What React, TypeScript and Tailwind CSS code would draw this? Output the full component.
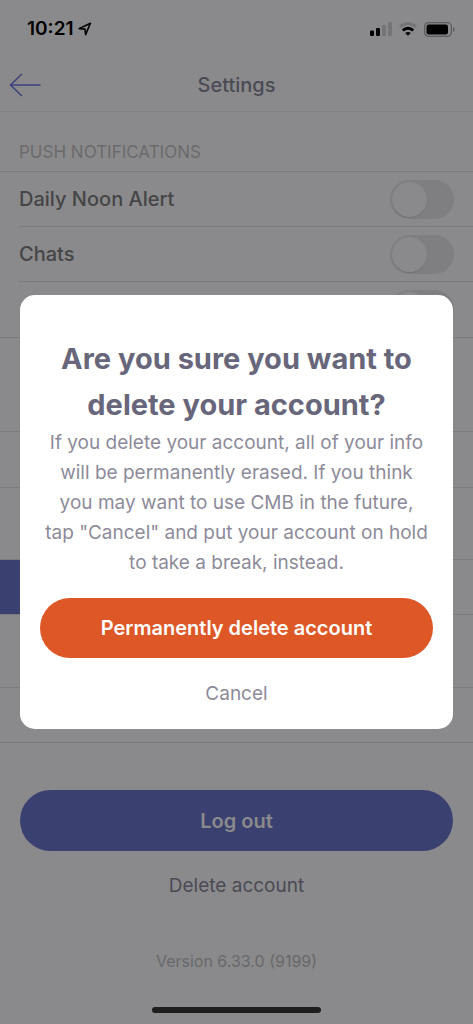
import { useState } from "react";

function StatusBar() {
  return (
    <div className="flex h-[58px] items-center justify-between pl-[27px] pr-[18px] text-black">
      <div className="flex items-center gap-1">
        <span className="text-[19px] leading-6 font-semibold">10:21</span>
        <svg width="14" height="14" viewBox="0 0 14 14" fill="none" aria-hidden="true">
          <path d="M1.2 6.6 12.4 1.3 7.6 12.6 7 7.1Z" stroke="currentColor" strokeWidth="1.6" strokeLinejoin="round" />
        </svg>
      </div>
      <div className="flex items-center gap-[7px]">
        <svg width="22" height="14" viewBox="0 0 22 14" aria-hidden="true">
          <rect x="0" y="8.5" width="4" height="5.5" rx="1.2" fill="#000" />
          <rect x="6" y="6" width="4" height="8" rx="1.2" fill="#000" />
          <rect x="12" y="3" width="4" height="11" rx="1.2" fill="#747476" />
          <rect x="18" y="0" width="4" height="14" rx="1.2" fill="#747476" />
        </svg>
        <svg width="18" height="14" viewBox="0 0 18 14" fill="none" aria-hidden="true">
          <path d="M1 5C5.500 .6 12.500 .6 17 5" stroke="#747476" strokeWidth="2.800" />
          <path d="M3.800 8.400C6.800 5.500 11.200 5.500 14.200 8.400" stroke="#000" strokeWidth="2.800" />
          <path d="M9 13.800 6.200 11C7.800 9.700 10.200 9.700 11.800 11Z" fill="#000" />
        </svg>
        <svg width="31" height="15" viewBox="0 0 31 15" aria-hidden="true">
          <rect x=".6" y=".6" width="26.800" height="13.800" rx="4" fill="none" stroke="#5c5c5e" strokeWidth="1.200" />
          <rect x="2.500" y="2.500" width="21.500" height="10" rx="2.200" fill="#000" />
          <path d="M29 5.200C31.200 6 31.200 9 29 9.800Z" fill="#5c5c5e" />
        </svg>
      </div>
    </div>
  );
}

function ToggleRow({ label, name }: { label: string; name: string }) {
  const [on, setOn] = useState(false);
  return (
    <label className="flex h-[55px] items-center justify-between pr-[19px] text-[20px] leading-6 font-medium text-[#454547]">
      <span>{label}</span>
      <span className="flex h-[39px] w-16 items-center rounded-full bg-[#7f7f81] p-[2px]">
        <input
          type="checkbox"
          aria-label={name}
          checked={on}
          onChange={() => setOn(!on)}
          className="h-[35px] w-[35px] appearance-none rounded-full bg-[#8a8a8c] shadow-[0_1px_1px_#727274] checked:ml-auto"
        />
      </span>
    </label>
  );
}

export default function App() {
  const [open, setOpen] = useState(true);
  return (
    <div className="relative min-h-screen bg-[#8a8a8c] font-['Inter','Liberation_Sans',sans-serif]">
      <StatusBar />
      <header className="grid h-[54px] grid-cols-[1fr_auto_1fr] items-center border-b border-[#818183] px-[9px]">
        <button type="button" aria-label="Back" className="w-8 text-[#3c4278]">
          <svg width="32" height="24" viewBox="0 0 32 24" fill="none" stroke="currentColor" strokeWidth="1.500" aria-hidden="true">
            <path d="M13 1 1.500 12 13 23M1.500 12H31.500" />
          </svg>
        </button>
        <h1 className="text-[20px] leading-6 font-medium text-[#4b4a54]">Settings</h1>
      </header>

      <main className="flex flex-col">
        <h2 className="flex h-[60px] items-end border-b border-[#7b7b7d] px-[19px] pb-[7px] text-[17px] leading-6 text-[#6a6a6c]">
          PUSH NOTIFICATIONS
        </h2>
        <div className="divide-y divide-[#7b7b7d] pl-[19px]">
          <ToggleRow label="Daily Noon Alert" name="Daily Noon Alert" />
          <ToggleRow label="Chats" name="Chats" />
          <ToggleRow label="" name="Notifications" />
        </div>
        <div className="h-[95px] border-y border-[#7b7b7d]" />
        <div className="h-14 border-b border-[#7b7b7d]" />
        <div className="h-[72px] border-b border-[#7b7b7d]" />
        <div className="h-[55px] border-b border-[#7b7b7d] bg-gradient-to-r from-[#3a4170] from-50% to-[#8a8a8c] to-50%" />
        <div className="h-[73px] border-b border-[#7b7b7d]" />
        <div className="h-[55px] border-b border-[#7b7b7d]" />

        <div className="flex flex-col items-center px-5 pt-[47px]">
          <button type="button" className="h-[61px] w-full rounded-full bg-[#3a4170] text-[20px] leading-6 font-semibold text-[#8a8a8c]">
            Log out
          </button>
          <button type="button" onClick={() => setOpen(true)} className="mt-[23px] text-[19px] leading-6 text-[#4b4a54]">
            Delete account
          </button>
          <p className="mt-[51px] text-[16px] leading-6 text-[#68686a]">Version 6.33.0 (9199)</p>
          <div className="mt-[34px] mb-[10px] h-[6px] w-[169px] rounded-full bg-[#1e1e1f]" />
        </div>
      </main>

      {open && (
        <div className="absolute inset-0 flex items-center justify-center px-5">
          <section
            role="dialog"
            aria-modal="true"
            aria-labelledby="dialog-title"
            className="flex w-full flex-col items-center rounded-[15px] bg-white px-5 pt-[41px] pb-[23px] text-center"
          >
            <h2 id="dialog-title" className="text-[29px] leading-[46px] font-bold text-[#68667a]">
              Are you sure you want to
              <br />
              delete your account?
            </h2>
            <p className="text-[19px] leading-[30px] text-[#8d8b9a]">
              If you delete your account, all of your info
              <br />
              will be permanently erased. If you think
              <br />
              you may want to use CMB in the future,
              <br />
              tap "Cancel" and put your account on hold
              <br />
              to take a break, instead.
            </p>
            <button type="button" className="mt-5 h-[60px] w-full rounded-full bg-[#de5726] text-[20px] leading-6 font-semibold text-white">
              Permanently delete account
            </button>
            <button type="button" onClick={() => setOpen(false)} className="mt-6 text-[19px] leading-6 text-[#8d8b9a]">
              Cancel
            </button>
          </section>
        </div>
      )}
    </div>
  );
}
